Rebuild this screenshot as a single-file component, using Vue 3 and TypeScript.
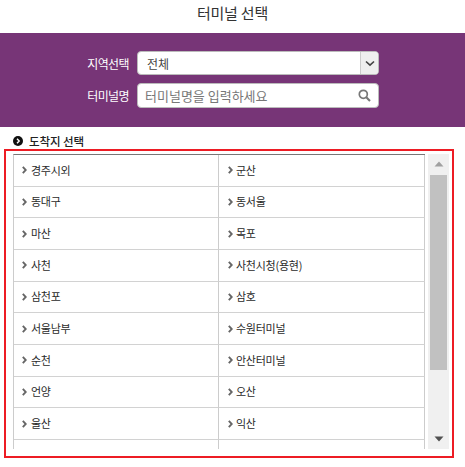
<script setup lang="ts">
const terminals: string[] = [
  '경주시외', '군산', '동대구', '동서울', '마산', '목포', '사천', '사천시청(용현)',
  '삼천포', '삼호', '서울남부', '수원터미널', '순천', '안산터미널', '언양', '오산',
  '울산', '익산'
]
</script>

<template>
  <div class="page">
    <header class="title">터미널 선택</header>
    <section class="filter">
      <div class="field">
        <label class="label">지역선택</label>
        <div class="control select">
          <span class="value">전체</span>
          <span class="caret">
            <svg width="10" height="7" viewBox="0 0 10 7"><path d="M1 1.5 L5 5.2 L9 1.5" fill="none" stroke="#444" stroke-width="1.6" /></svg>
          </span>
        </div>
      </div>
      <div class="field">
        <label class="label">터미널명</label>
        <div class="control search">
          <span class="placeholder">터미널명을 입력하세요</span>
          <svg class="glass" width="13" height="13" viewBox="0 0 13 13">
            <circle cx="5.3" cy="5.3" r="4" fill="none" stroke="#777" stroke-width="1.7" />
            <path d="M8.3 8.3 L12 12" stroke="#777" stroke-width="2.1" />
          </svg>
        </div>
      </div>
    </section>
    <h2 class="heading">
      <svg width="10" height="10" viewBox="0 0 10 10">
        <circle cx="5" cy="5" r="5" fill="#111" />
        <path d="M4 2.8 L6.2 5 L4 7.2" fill="none" stroke="#fff" stroke-width="1.4" />
      </svg>
      도착지 선택
    </h2>
    <div class="frame">
      <div class="list">
        <div class="grid">
          <div v-for="name in terminals" :key="name" class="cell">
            <svg class="chev" width="5" height="8" viewBox="0 0 5 8"><path d="M0.8 0.8 L3.8 4 L0.8 7.2" fill="none" stroke="#666" stroke-width="1.9" /></svg>
            <span class="name">{{ name }}</span>
          </div>
          <div class="cell"></div>
          <div class="cell"></div>
        </div>
      </div>
      <div class="scrollbar">
        <svg class="arrow" width="10" height="6" viewBox="0 0 10 6"><path d="M5 0.5 L9.5 5.5 H0.5 Z" fill="#a0a0a0" /></svg>
        <div class="track"><div class="thumb"></div></div>
        <svg class="arrow" width="10" height="6" viewBox="0 0 10 6"><path d="M5 5.5 L9.5 0.5 H0.5 Z" fill="#505050" /></svg>
      </div>
    </div>
  </div>
</template>

<style>
html, body { margin: 0; background: #fff; }
</style>

<style scoped>
.page {
  width: 465px;
  height: 467px;
  overflow: hidden;
  font-family: "Noto Sans CJK KR", "Noto Sans", sans-serif;
  color: #222;
}
.title {
  height: 33px;
  line-height: 26px;
  text-align: center;
  font-size: 15px;
  letter-spacing: -0.2px;
  color: #333;
}
.filter {
  height: 94px;
  box-sizing: border-box;
  padding-top: 18px;
  background: #773577;
  display: flex;
  flex-direction: column;
  gap: 8px;
}
.field {
  display: flex;
  align-items: center;
  gap: 8px;
}
.label {
  width: 129px;
  text-align: right;
  color: #fff;
  font-size: 12px;
  letter-spacing: -0.6px;
}
.control {
  width: 242px;
  box-sizing: border-box;
  background: #fff;
  border: 1px solid #bbb;
  border-radius: 4px;
  display: flex;
  align-items: center;
  font-size: 12px;
}
.select { height: 24px; }
.search { height: 25px; }
.value { flex: 1; padding-left: 9px; color: #444; }
.caret {
  width: 17px;
  height: 100%;
  background: #efefef;
  border-left: 1px solid #ccc;
  border-radius: 0 3px 3px 0;
  display: flex;
  align-items: center;
  justify-content: center;
}
.placeholder { flex: 1; padding-left: 7px; color: #777; font-size: 13px; }
.glass { margin-right: 7px; }
.heading {
  margin: 0;
  height: 22px;
  box-sizing: border-box;
  padding: 6px 0 0 13px;
  display: flex;
  align-items: center;
  gap: 6px;
  font-size: 11.5px;
  font-weight: 500;
  letter-spacing: -0.1px;
  color: #222;
}
.frame {
  width: 450px;
  height: 309px;
  margin-left: 4px;
  box-sizing: border-box;
  border: 2px solid #ed1c24;
  padding: 3px 3px 6px 7px;
  display: flex;
  gap: 3px;
}
.list {
  width: 412px;
  height: 295px;
  overflow: hidden;
  box-sizing: border-box;
  border-top: 1px solid #777;
  border-left: 1px solid #ccc;
}
.grid {
  display: grid;
  grid-template-columns: 205px 206px;
  grid-auto-rows: 31.67px;
}
.cell {
  box-sizing: border-box;
  border-bottom: 1px solid #d2d2d2;
  border-right: 1px solid #ccc;
  display: flex;
  align-items: center;
  gap: 4px;
  padding-left: 8px;
  font-size: 11px;
  letter-spacing: -0.25px;
  color: #2a2a2a;
}
.cell:nth-child(even) { padding-left: 9px; gap: 3px; }
.name { line-height: 1; }
.scrollbar {
  width: 21px;
  height: 295px;
  background: #f0f0f0;
  display: flex;
  flex-direction: column;
  align-items: center;
}
.arrow { flex: none; margin: 7px 0; }
.track { flex: 1; width: 17px; padding-top: 1px; margin-bottom: -1px; }
.thumb { height: 195px; background: #c1c1c1; }
</style>
